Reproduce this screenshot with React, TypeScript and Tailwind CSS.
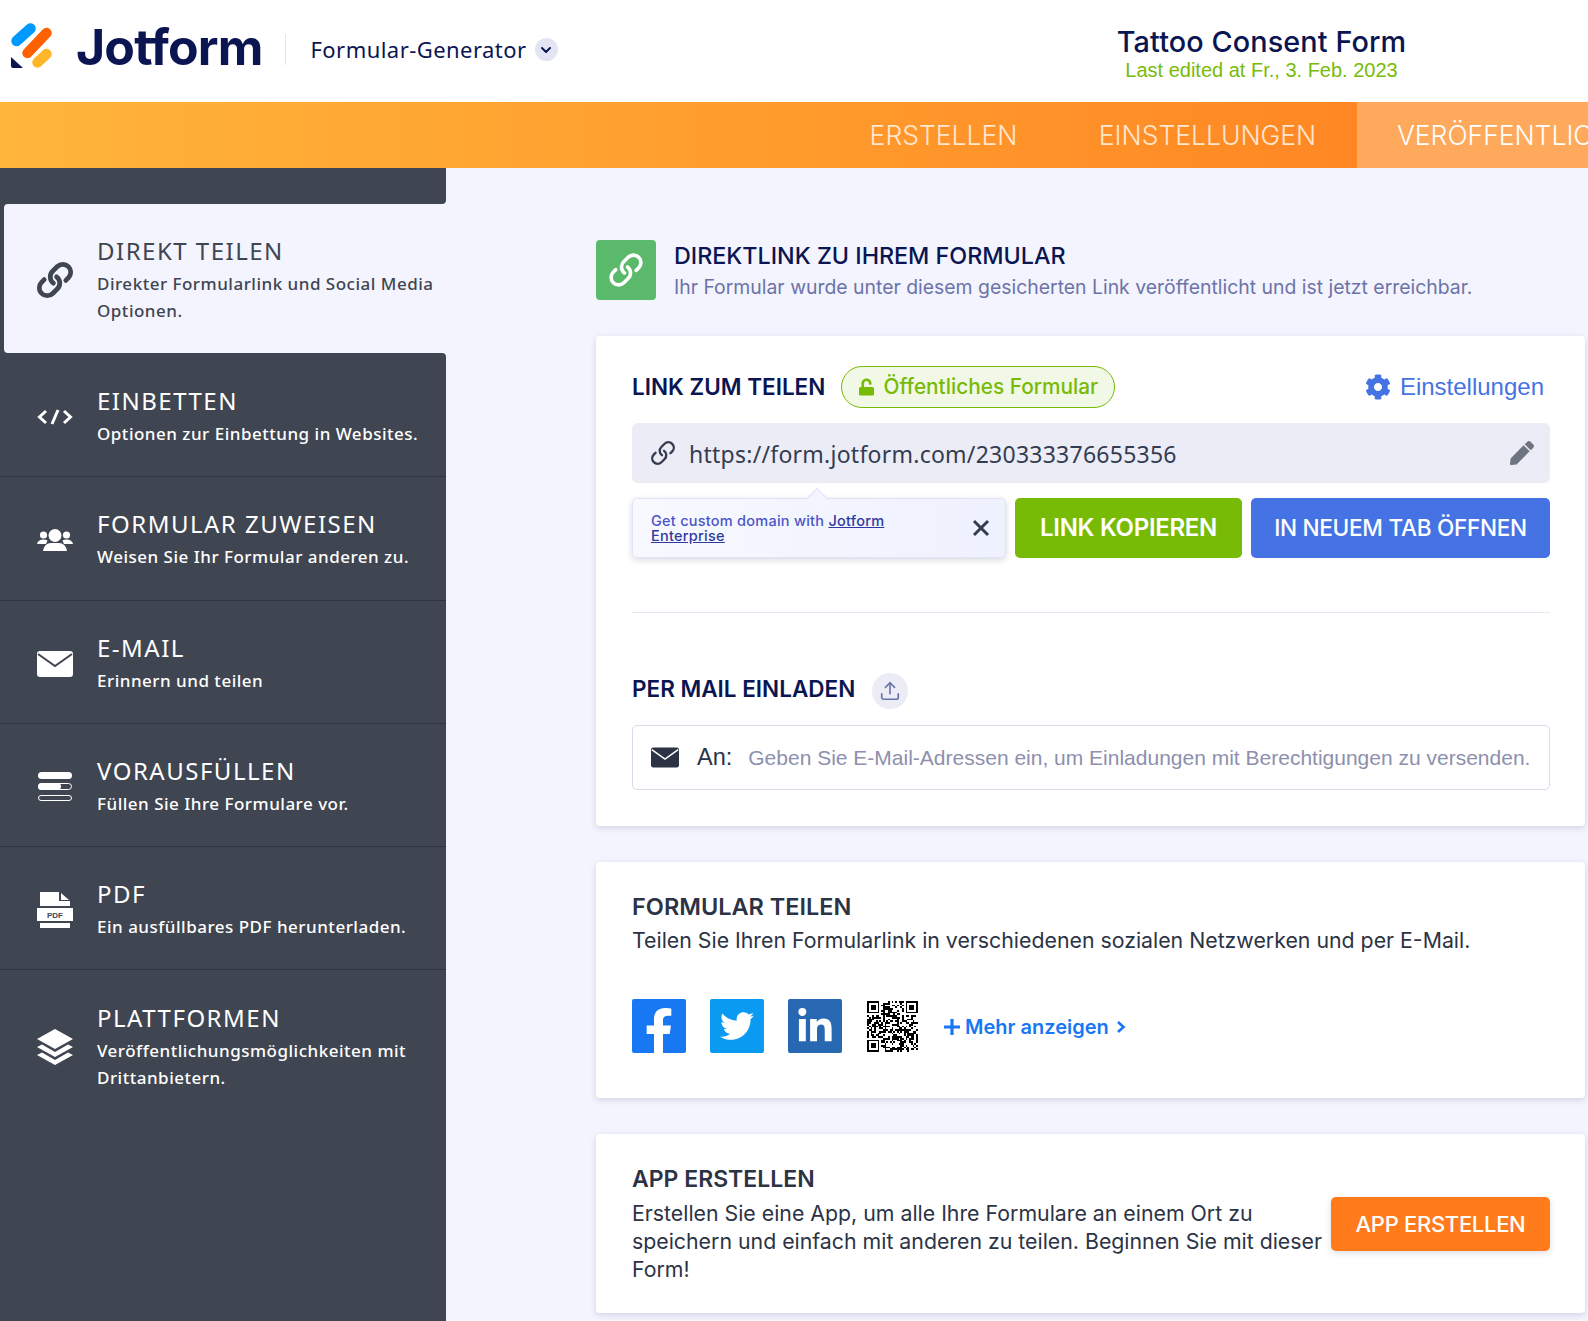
import React from "react";
import { FaFacebookF, FaTwitter, FaLinkedinIn, FaCog, FaPen, FaUnlock } from "react-icons/fa";
import { Link, Upload, ChevronDown } from "lucide-react";

const LinkIcon = ({ className, w = 3 }: { className?: string; w?: number }) => <Link className={className} strokeWidth={w} />;

const Mail = ({ className, flap }: { className?: string; flap: string }) => (
  <svg viewBox="0 0 36 26" className={className}>
    <rect width="36" height="26" y="0" rx="3" fill="currentColor" />
    <path d="M1 3 L18 15 L35 3" fill="none" stroke={flap} strokeWidth="2" />
  </svg>
);

const CodeIcon = () => (
  <svg viewBox="0 0 36 16" className="w-9 h-4" fill="none" stroke="currentColor" strokeWidth="3">
    <path d="M9 2 L2.5 8 L9 14 M27 2 L33.5 8 L27 14" />
    <path d="M21 1 L15 15" />
  </svg>
);

const UsersIcon = () => (
  <svg viewBox="0 0 36 22" className="w-9 h-[22px]" fill="#fff">
    <circle cx="6.5" cy="6" r="3.6" />
    <circle cx="29.5" cy="6" r="3.6" />
    <path d="M0 15 Q1 10.5 6.5 10.5 Q9 10.5 10.5 11.5 L9 15 Z" />
    <path d="M36 15 Q35 10.5 29.5 10.5 Q27 10.5 25.5 11.5 L27 15 Z" />
    <circle cx="18" cy="6.5" r="6.5" />
    <path d="M6 22 Q7.5 14 14 14 H22 Q28.5 14 30 22 Z" />
  </svg>
);

const PrefillIcon = () => (
  <svg viewBox="0 0 36 30" className="w-9 h-[30px]">
    <rect x="1" y="0" width="34" height="7" rx="3.5" fill="#fff" />
    <rect x="1.5" y="11.5" width="33" height="6" rx="3" fill="none" stroke="#fff" />
    <rect x="1" y="11" width="23" height="7" rx="3.5" fill="#fff" />
    <rect x="1.5" y="23.5" width="33" height="5" rx="2.5" fill="none" stroke="#fff" />
  </svg>
);

const PdfIcon = () => (
  <svg viewBox="0 0 36 36" className="w-9 h-9">
    <path d="M3 0 H22 V9 H33 V14 H3 Z" fill="#fff" />
    <path d="M24 1 L32 8 H24 Z" fill="#fff" />
    <rect x="0" y="16" width="36" height="13" fill="#fff" />
    <rect x="3" y="31" width="30" height="5" fill="#fff" />
    <text x="18" y="26" textAnchor="middle" fontSize="8" fontWeight="700" fontFamily="Liberation Sans, sans-serif" fill="#3f4551">PDF</text>
  </svg>
);

const LayersIcon = () => (
  <svg viewBox="0 0 36 36" className="w-9 h-9" fill="#fff">
    <path d="M18 0 L36 10 L18 20 L0 10 Z" />
    <path d="M5 15.5 L18 23 L31 15.5 L36 18 L18 28 L0 18 Z" />
    <path d="M5 23.5 L18 31 L31 23.5 L36 26 L18 36 L0 26 Z" />
  </svg>
);

const items = [
  { title: "EINBETTEN", sub: ["Optionen zur Einbettung in Websites."], icon: <CodeIcon />, extra: "rounded-tr-[4px] pt-[33px] pb-[29px] border-b" },
  { title: "FORMULAR ZUWEISEN", sub: ["Weisen Sie Ihr Formular anderen zu."], icon: <UsersIcon />, extra: "pt-[32px] pb-[30px] border-b" },
  { title: "E-MAIL", sub: ["Erinnern und teilen"], icon: <Mail className="w-9 h-[26px]" flap="#3f4551" />, extra: "pt-[32px] pb-[29px] border-b" },
  { title: "VORAUSFÜLLEN", sub: ["Füllen Sie Ihre Formulare vor."], icon: <PrefillIcon />, extra: "pt-[32px] pb-[29px] border-b" },
  { title: "PDF", sub: ["Ein ausfüllbares PDF herunterladen."], icon: <PdfIcon />, extra: "pt-[32px] pb-[29px] border-b" },
  { title: "PLATTFORMEN", sub: ["Veröffentlichungsmöglichkeiten mit", "Drittanbietern."], icon: <LayersIcon />, extra: "pt-[33px] pb-[29px]" },
];

const NavText = ({ title, sub }: { title: string; sub: string[] }) => (
  <div className="min-w-0">
    <div className="text-[24px] leading-[30px] tracking-[1.5px] font-normal whitespace-nowrap">{title}</div>
    <div className="mt-[4px] text-[17px] leading-[27px] tracking-[0.5px] font-medium whitespace-nowrap">
      {sub.map((s) => (
        <div key={s}>{s}</div>
      ))}
    </div>
  </div>
);

const QR = () => {
  const n = 29;
  const cells: React.ReactNode[] = [];
  const inFinder = (x: number, y: number, a: number, b: number) => x >= a && x < a + 8 && y >= b && y < b + 8;
  let seed = 77;
  for (let y = 0; y < n; y++)
    for (let x = 0; x < n; x++) {
      seed = (seed * 1103515245 + 12345) & 0x7fffffff;
      if (inFinder(x, y, 0, 0) || inFinder(x, y, n - 8, 0) || inFinder(x, y, 0, n - 8)) continue;
      if ((seed >> 16) % 100 < 52) cells.push(<rect key={x + "-" + y} x={x} y={y} width="1" height="1" />);
    }
  const finder = (a: number, b: number) => (
    <g key={a + "f" + b}>
      <rect x={a} y={b} width="7" height="7" />
      <rect x={a + 1} y={b + 1} width="5" height="5" fill="#fff" />
      <rect x={a + 2} y={b + 2} width="3" height="3" />
    </g>
  );
  return (
    <svg viewBox={`0 0 ${n} ${n}`} className="w-[51px] h-[51px]" shapeRendering="crispEdges">
      {cells}
      {finder(0, 0)}
      {finder(n - 7, 0)}
      {finder(0, n - 7)}
    </svg>
  );
};

const Logo = () => (
  <svg viewBox="11 23 41 45" className="w-[41px] h-[45px]" fill="none" strokeWidth="10.5" strokeLinecap="round">
    <path d="M16.5 41 L30.5 28.5" stroke="#0099ff" />
    <path d="M27.5 53 L46.5 33" stroke="#ff6100" />
    <path d="M37.5 62.5 L46.5 54" stroke="#ffb629" />
    <path d="M11 57 L23 68 H13 Q11 68 11 66 Z" fill="#0a1551" stroke="none" />
  </svg>
);

const cardShadow = "shadow-[0_2px_6px_rgba(37,45,91,0.16)]";

export default function App() {
  return (
    <div className="w-[1588px] h-[1321px] overflow-hidden bg-[#f3f4fd] flex flex-col font-['Inter',sans-serif] text-[#2c3345]">
      <header className="h-[102px] bg-white flex items-center shrink-0">
        <div className="ml-[11px] mt-[-11px] flex items-center">
          <Logo />
        </div>
        <div className="ml-[24px] mt-[-9px] text-[50px] leading-none font-bold tracking-[-0.85px] text-[#0a1551]">Jotform</div>
        <div className="ml-[23px] mt-[-4px] w-px h-[31px] bg-[#e3e5f5]" />
        <div className="ml-[24px] mt-[-3px] text-[22px] tracking-[0.45px] text-[#0a1551] whitespace-nowrap font-['Noto_Sans',sans-serif]">Formular-Generator</div>
        <div className="ml-[8px] mt-[-3px] w-[23px] h-[23px] rounded-full bg-[#e3e5f5] flex items-center justify-center text-[#0a1551]">
          <ChevronDown className="w-4 h-4" strokeWidth={3} />
        </div>
        <div className="ml-[559px] w-[290px] flex flex-col items-center mt-[5px]">
          <div className="text-[28.8px] leading-[34px] font-medium text-[#0a1551] whitespace-nowrap tracking-[0.1px]">Tattoo Consent Form</div>
          <div className="text-[20px] leading-[23px] text-[#78bb07] whitespace-nowrap font-['Liberation_Sans',sans-serif]">Last edited at Fr., 3. Feb. 2023</div>
        </div>
      </header>

      <nav className="h-[66px] shrink-0 flex items-stretch bg-gradient-to-r from-[#ffb53a] to-[#ff7f1f] text-[26.5px] font-light text-[#ffe6cf] overflow-hidden">
        <div className="flex-1" />
        <div className="w-[229px] pt-[2px] flex items-center justify-center whitespace-nowrap">ERSTELLEN</div>
        <div className="w-[299px] pt-[2px] flex items-center justify-center whitespace-nowrap">EINSTELLUNGEN</div>
        <div className="w-[231px] pt-[2px] pl-[40px] flex items-center bg-[#ffa95c] text-white whitespace-nowrap overflow-hidden">VERÖFFENTLICHEN</div>
      </nav>

      <div className="flex-1 flex min-h-0">
        <aside className="w-[446px] shrink-0 flex flex-col text-white font-['Noto_Sans',sans-serif]">
          <div className="h-[36px] bg-[#3f4551] rounded-br-[4px]" />
          <div className="bg-[#3f4551] h-[149px]">
            <div className="ml-1 h-full bg-[#f3f4fd] rounded-l-[4px] flex items-center pl-[33px] pt-[3px] text-[#3f4551]">
              <div className="w-9 h-9 mr-[24px] shrink-0">
                <LinkIcon className="w-[38px] h-[38px] -ml-[1px] -mt-[1px] -scale-x-100 rotate-90" w={3} />
              </div>
              <NavText title="DIREKT TEILEN" sub={["Direkter Formularlink und Social Media", "Optionen."]} />
            </div>
          </div>
          {items.map((it) => (
            <div key={it.title} className={`bg-[#3f4551] border-[#2f3540] flex items-center pl-[37px] ${it.extra}`}>
              <div className="w-9 mr-[24px] shrink-0 flex justify-center">{it.icon}</div>
              <NavText title={it.title} sub={it.sub} />
            </div>
          ))}
          <div className="flex-1 bg-[#3f4551]" />
        </aside>

        <main className="flex-1 min-w-0 pl-[150px] pr-[3px] pt-[72px]">
          <div className="flex items-center h-[60px]">
            <div className="w-[60px] h-[60px] rounded-[4px] bg-[#5bb96b] flex items-center justify-center text-white shrink-0">
              <LinkIcon className="w-9 h-9 rotate-90 -scale-x-100" w={2.4} />
            </div>
            <div className="ml-[18px] mt-[3px]">
              <div className="text-[23.3px] leading-[30px] font-medium text-[#0a1551]">DIREKTLINK ZU IHREM FORMULAR</div>
              <div className="mt-[2px] text-[19.4px] leading-[29px] text-[#6c73a8] whitespace-nowrap">Ihr Formular wurde unter diesem gesicherten Link veröffentlicht und ist jetzt erreichbar.</div>
            </div>
          </div>

          <section className={`mt-[36px] h-[490px] bg-white rounded-[4px] ${cardShadow} pl-[36px] pr-[35px] pt-[30px]`}>
            <div className="flex items-center h-[42px]">
              <div className="text-[22.5px] font-semibold text-[#0a1551] whitespace-nowrap">LINK ZUM TEILEN</div>
              <div className="ml-[16px] h-[42px] w-[274px] rounded-full border border-[#78bb07] bg-[#f1f8e6] flex items-center justify-center text-[#78bb07] text-[20.8px] font-medium whitespace-nowrap">
                <FaUnlock className="w-[15px] h-[18px] mr-[10px]" />
                Öffentliches Formular
              </div>
              <div className="ml-auto mr-[6px] flex items-center text-[#4573e3] text-[24px] font-['Liberation_Sans',sans-serif] whitespace-nowrap">
                <FaCog className="w-[26px] h-[26px] mr-[9px]" />
                Einstellungen
              </div>
            </div>
            <div className="mt-[15px] h-[60px] rounded-[6px] bg-[#ebecf6] flex items-center pl-[18px] pr-[16px]">
              <LinkIcon className="w-[26px] h-[26px] rotate-90 -scale-x-100 text-[#343c51]" w={2.2} />
              <div className="ml-[13px] pt-[3px] text-[23px] tracking-[0.25px] text-[#343c51] font-['Noto_Sans',sans-serif]">https://form.jotform.com/230333376655356</div>
              <FaPen className="ml-auto w-6 h-6 text-[#6f7481]" />
            </div>
            <div className="mt-[15px] flex h-[60px]">
              <div className="relative w-[374px] rounded-[5px] border border-[#dfe3f6] bg-gradient-to-r from-[#f8f9ff] to-[#eef1fe] shadow-[0_2px_6px_rgba(37,45,91,0.18)] flex items-center pl-[18px] pr-[15px]">
                <div className="absolute -top-[8px] left-[176px] w-4 h-4 rotate-45 bg-[#f4f5fe] border-l border-t border-[#dfe3f6]" />
                <div className="relative text-[14.5px] leading-[15.5px] font-medium tracking-[0.25px] text-[#4c55c8] w-[262px]">
                  Get custom domain with <span className="underline text-[#2f3aa0]">Jotform Enterprise</span>
                </div>
                <svg viewBox="0 0 18 18" className="ml-auto w-[18px] h-[18px] text-[#343c51]" fill="none" stroke="currentColor" strokeWidth="3">
                  <path d="M2 2 L16 16 M16 2 L2 16" />
                </svg>
              </div>
              <div className="ml-[9px] w-[227px] rounded-[5px] bg-[#78bb07] text-white flex items-center justify-center text-[24px] font-semibold tracking-[-0.3px] whitespace-nowrap">LINK KOPIEREN</div>
              <div className="ml-[9px] w-[299px] rounded-[5px] bg-[#4573e3] text-white flex items-center justify-center text-[22.6px] font-medium tracking-[-0.3px] whitespace-nowrap">IN NEUEM TAB ÖFFNEN</div>
            </div>
            <hr className="mt-[54px] border-t border-[#e6e7f2]" />
            <div className="mt-[58px] flex items-center h-[36px]">
              <div className="text-[22.5px] font-semibold text-[#0a1551] whitespace-nowrap">PER MAIL EINLADEN</div>
              <div className="ml-[17px] mt-[4px] w-9 h-9 rounded-full bg-[#ebecf6] flex items-center justify-center text-[#6c73a8]">
                <Upload className="w-[22px] h-[22px]" strokeWidth={1.8} />
              </div>
            </div>
            <div className="mt-[18px] h-[65px] rounded-[5px] border border-[#dadbe8] flex items-center pl-[18px] font-['Liberation_Sans',sans-serif]">
              <Mail className="w-[28px] h-[23px] text-[#2c3345]" flap="#ffffff" />
              <div className="ml-[18px] text-[23.5px] text-[#2c3345]">An:</div>
              <div className="ml-[16px] text-[21px] text-[#8d90ad] whitespace-nowrap">Geben Sie E-Mail-Adressen ein, um Einladungen mit Berechtigungen zu versenden.</div>
            </div>
          </section>

          <section className={`mt-[36px] h-[236px] bg-white rounded-[4px] ${cardShadow} px-[36px] pt-[30px]`}>
            <div className="text-[23.5px] leading-[30px] font-semibold">FORMULAR TEILEN</div>
            <div className="text-[21.3px] leading-[28px] mt-[4px] whitespace-nowrap">Teilen Sie Ihren Formularlink in verschiedenen sozialen Netzwerken und per E-Mail.</div>
            <div className="mt-[45px] flex items-center">
              <div className="w-[54px] h-[54px] rounded-[2px] bg-[#1877f2] flex items-end justify-center text-white overflow-hidden">
                <FaFacebookF className="w-[44px] h-[46px] mb-[-1px]" />
              </div>
              <div className="ml-6 w-[54px] h-[54px] rounded-[2px] bg-[#0a9af2] flex items-center justify-center text-white">
                <FaTwitter className="w-[34px] h-[34px]" />
              </div>
              <div className="ml-6 w-[54px] h-[54px] rounded-[2px] bg-[#2867b2] flex items-center justify-center text-white">
                <FaLinkedinIn className="w-[38px] h-[38px] mt-[2px]" />
              </div>
              <div className="ml-[25px]">
                <QR />
              </div>
              <div className="ml-[25px] mt-[2px] flex items-center text-[#1877f2] text-[20px] font-semibold whitespace-nowrap">
                <svg viewBox="0 0 18 18" className="w-[18px] h-[18px] mr-[4px]" fill="none" stroke="currentColor" strokeWidth="3.2">
                  <path d="M9 1 V17 M1 9 H17" />
                </svg>
                Mehr anzeigen
                <svg viewBox="0 0 10 14" className="w-[10px] h-[14px] ml-[7px]" fill="none" stroke="currentColor" strokeWidth="2.6">
                  <path d="M2 2 L7.5 7 L2 12" />
                </svg>
              </div>
            </div>
          </section>

          <section className={`mt-[36px] h-[179px] bg-white rounded-[4px] ${cardShadow} pl-[36px] pr-[35px] pt-[30px] flex items-start`}>
            <div className="w-[699px] shrink-0">
              <div className="text-[23px] leading-[30px] font-semibold">APP ERSTELLEN</div>
              <div className="text-[21.3px] leading-[28px] mt-[5px]">Erstellen Sie eine App, um alle Ihre Formulare an einem Ort zu speichern und einfach mit anderen zu teilen. Beginnen Sie mit dieser Form!</div>
            </div>
            <div className={`ml-auto mt-[33px] w-[219px] h-[54px] rounded-[5px] bg-[#ff7b1c] text-white flex items-center justify-center text-[22px] font-medium ${cardShadow} whitespace-nowrap tracking-[-0.3px]`}>APP ERSTELLEN</div>
          </section>
        </main>
      </div>
    </div>
  );
}
